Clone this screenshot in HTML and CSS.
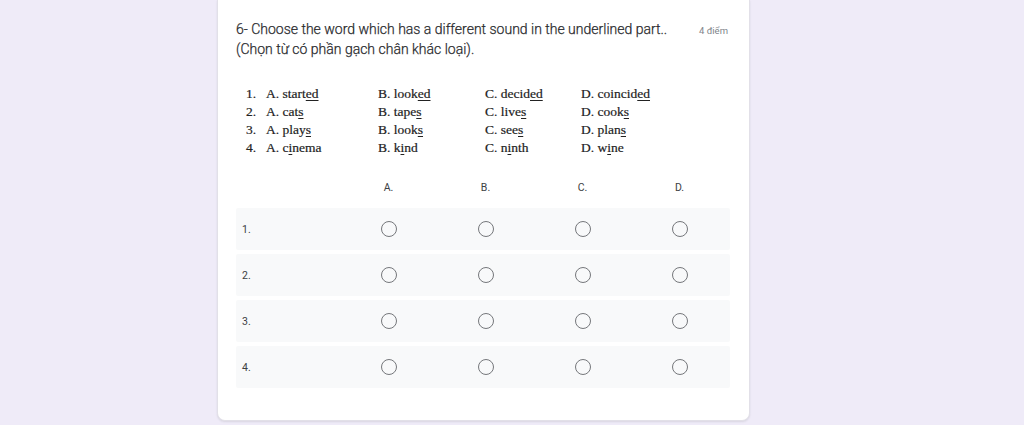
FILE: index.html
```html
<!DOCTYPE html>
<html>
<head>
<meta charset="utf-8">
<link rel="stylesheet" href="styles.css">
</head>
<body>
<div class="page">
  <div class="card">
    <div class="head">
      <div class="title">6- Choose the word which has a different sound in the underlined part..<br>(Chọn từ có phần gạch chân khác loại).</div>
      <div class="points">4 điểm</div>
    </div>
    <div class="list">
      <span>1.</span><span>A. start<u>ed</u></span><span>B. look<u>ed</u></span><span>C. decid<u>ed</u></span><span>D. coincid<u>ed</u></span>
      <span>2.</span><span>A. cat<u>s</u></span><span>B. tape<u>s</u></span><span>C. live<u>s</u></span><span>D. cook<u>s</u></span>
      <span>3.</span><span>A. play<u>s</u></span><span>B. look<u>s</u></span><span>C. see<u>s</u></span><span>D. plan<u>s</u></span>
      <span>4.</span><span>A. c<u>i</u>nema</span><span>B. k<u>i</u>nd</span><span>C. n<u>i</u>nth</span><span>D. w<u>i</u>ne</span>
    </div>
    <div class="grid">
      <div class="ghead">
        <span class="rl"></span><span>A.</span><span>B.</span><span>C.</span><span>D.</span>
      </div>
      <div class="grow"><span class="rl">1.</span><span><i class="radio"></i></span><span><i class="radio"></i></span><span><i class="radio"></i></span><span><i class="radio"></i></span></div>
      <div class="grow"><span class="rl">2.</span><span><i class="radio"></i></span><span><i class="radio"></i></span><span><i class="radio"></i></span><span><i class="radio"></i></span></div>
      <div class="grow"><span class="rl">3.</span><span><i class="radio"></i></span><span><i class="radio"></i></span><span><i class="radio"></i></span><span><i class="radio"></i></span></div>
      <div class="grow"><span class="rl">4.</span><span><i class="radio"></i></span><span><i class="radio"></i></span><span><i class="radio"></i></span><span><i class="radio"></i></span></div>
    </div>
  </div>
</div>
</body>
</html>
```

FILE: styles.css
```css
html, body {
  margin: 0;
  padding: 0;
  background: #efebf8;
  height: 100%;
  overflow: hidden;
}
.page {
  display: flex;
  justify-content: flex-start;
  padding-left: 217px;
}
.card {
  width: 533px;
  box-sizing: border-box;
  height: 421px;
  background: #fff;
  border: 1px solid #e2e0e8;
  border-top: none;
  border-radius: 0 0 8px 8px;
  box-shadow: 0 1px 2px rgba(60, 64, 67, 0.12);
  padding: 19px 19px 0 18px;
  font-family: Roboto, "Noto Sans", sans-serif;
}
.head {
  display: flex;
  justify-content: space-between;
  align-items: flex-start;
}
.title {
  font-size: 14px;
  line-height: 20px;
  color: #2b2c2f;
  font-weight: 300;
  -webkit-text-stroke: 0.25px #2b2c2f;
}
.points {
  font-size: 9.5px;
  color: #80848a;
  padding-top: 6px;
  padding-right: 2px;
}
.list {
  display: grid;
  grid-template-columns: 20px 112px 107px 96px auto;
  margin: 26px 0 0 10px;
  font-family: "Liberation Serif", serif;
  font-size: 13.5px;
  line-height: 18px;
  color: #222;
  -webkit-text-stroke: 0.2px #222;
}
.list u {
  text-decoration-thickness: 1px;
  text-underline-offset: 2px;
}
.grid {
  margin-top: 20px;
}
.ghead, .grow {
  display: grid;
  grid-template-columns: 104px repeat(4, 97px);
  align-items: center;
  width: 494px;
}
.ghead {
  height: 20px;
  font-size: 10.5px;
  color: #3c4043;
  margin-bottom: 11px;
}
.ghead span, .grow span {
  text-align: center;
}
.ghead .rl, .grow .rl {
  text-align: left;
  padding-left: 6px;
}
.grow {
  height: 42px;
  background: #f8f9fa;
  margin-bottom: 4px;
  border-radius: 2px;
  font-size: 10.5px;
  color: #3c4043;
}
.grow span {
  display: flex;
  justify-content: center;
  align-items: center;
}
.grow .rl {
  justify-content: flex-start;
}
.radio {
  display: block;
  width: 14px;
  height: 14px;
  border: 1.5px solid #75777b;
  border-radius: 50%;
}
```
